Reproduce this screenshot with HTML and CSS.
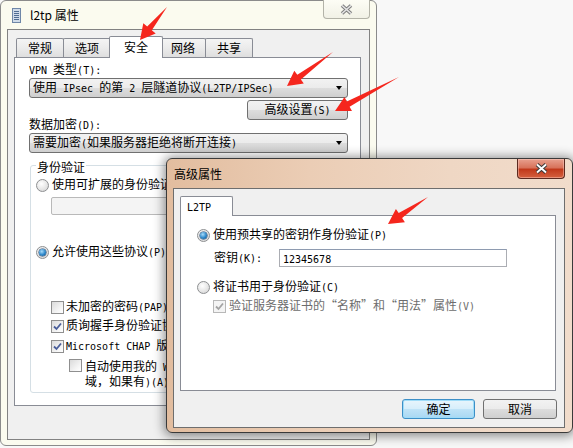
FILE: index.html
```html
<!DOCTYPE html>
<html lang="zh-CN">
<head>
  <meta charset="UTF-8" />
  <title>l2tp 属性</title>
  <link rel="stylesheet" href="styles.css">
</head>
<body>
<div class="desk">

  <!-- back window: l2tp properties -->
  <div class="win back">
    <div class="titlebar">
      <svg class="appicon" width="9" height="15" viewBox="0 0 9 15">
        <rect x="0.5" y="0.5" width="8" height="14" fill="#cfdbe9" stroke="#6f87a8"/>
        <path d="M2 3.5h5M2 5.5h5M2 7.5h5M2 9.5h5M2 11.5h5" stroke="#4f6c93"/>
      </svg>
      <span class="caption">l2tp 属性</span>
      <span class="close idle">
        <svg width="13" height="11" viewBox="0 0 13 11">
          <path d="M2 1.5l9 8M11 1.5l-9 8" stroke="#7d7d7d" stroke-width="3.6"/>
          <path d="M2 1.5l9 8M11 1.5l-9 8" stroke="#e4e4e4" stroke-width="1.6"/>
        </svg>
      </span>
    </div>
    <div class="client">
      <div class="tabs">
        <span class="tab">常规</span>
        <span class="tab">选项</span>
        <span class="tab sel">安全</span>
        <span class="tab narrow">网络</span>
        <span class="tab">共享</span>
      </div>
      <div class="page">
        <div class="lbl"><span class="e">VPN </span>类型<span class="e">(T):</span></div>
        <div class="combo">
          <span>使用<span class="e"> IPsec </span>的第<span class="e"> 2 </span>层隧道协议<span class="e">(L2TP/IPSec)</span></span>
          <span class="caret"></span>
        </div>
        <div class="btn-row">
          <span class="btn wide"><span>高级设置<span class="e">(S)</span></span></span>
        </div>
        <div class="lbl tight">数据加密<span class="e">(D):</span></div>
        <div class="combo">
          <span>需要加密<span class="e">(</span>如果服务器拒绝将断开连接<span class="e">)</span></span>
          <span class="caret"></span>
        </div>

        <div class="group">
          <div class="legend">身份验证</div>
          <div class="row first">
            <span class="radio"></span><span>使用可扩展的身份验证协议<span class="e">(EAP)(E)</span></span>
          </div>
          <div class="dcombo"></div>
          <div class="row r2">
            <span class="radio on"></span><span>允许使用这些协议<span class="e">(P)</span></span>
          </div>
          <div class="row sub c1">
            <span class="cb"></span><span>未加密的密码<span class="e">(PAP)</span></span>
          </div>
          <div class="row sub c2">
            <span class="cb"><svg width="11" height="11" viewBox="0 0 11 11"><path d="M2 5.5l2.5 2.5 4.5-5.5" fill="none" stroke="#4a5e9a" stroke-width="1.8"/></svg></span><span>质询握手身份验证协议<span class="e">(CHAP)</span></span>
          </div>
          <div class="row sub c3">
            <span class="cb"><svg width="11" height="11" viewBox="0 0 11 11"><path d="M2 5.5l2.5 2.5 4.5-5.5" fill="none" stroke="#4a5e9a" stroke-width="1.8"/></svg></span><span><span class="e">Microsoft CHAP </span>版本<span class="e"> 2 (MS-CHAP v2)</span></span>
          </div>
          <div class="row sub2">
            <span class="cb"></span>
            <span>自动使用我的<span class="e"> Windows </span>登录名称和密码<span class="e">(</span>及<br>域，如果有<span class="e">)(A)</span></span>
          </div>
        </div>
      </div>
    </div>
  </div>

  <!-- front dialog: advanced properties -->
  <div class="win dlg">
    <div class="titlebar">
      <span class="caption">高级属性</span>
      <span class="close hot">
        <svg width="13" height="11" viewBox="0 0 13 11">
          <path d="M2 1.5l9 8M11 1.5l-9 8" stroke="#3b3b3b" stroke-width="3.8"/>
          <path d="M2 1.5l9 8M11 1.5l-9 8" stroke="#fff" stroke-width="1.8"/>
        </svg>
      </span>
    </div>
    <div class="client">
      <div class="tabs">
        <span class="tab sel solo"><span class="e">L2TP</span></span>
      </div>
      <div class="page">
        <div class="row">
          <span class="radio on"></span><span>使用预共享的密钥作身份验证<span class="e">(P)</span></span>
        </div>
        <div class="row keyrow">
          <span class="klbl">密钥<span class="e">(K):</span></span>
          <span class="inp"><span class="e">12345678</span></span>
        </div>
        <div class="row r3">
          <span class="radio"></span><span>将证书用于身份验证<span class="e">(C)</span></span>
        </div>
        <div class="row off">
          <span class="cb dis"><svg width="11" height="11" viewBox="0 0 11 11"><path d="M2 5.5l2.5 2.5 4.5-5.5" fill="none" stroke="#a3a3a3" stroke-width="1.8"/></svg></span><span>验证服务器证书的“名称”和“用法”属性<span class="e">(V)</span></span>
        </div>
      </div>
      <div class="btns">
        <span class="btn ok">确定</span>
        <span class="btn cancel">取消</span>
      </div>
    </div>
  </div>

  <!-- red annotation arrows -->
  <svg class="arrows" width="573" height="448" viewBox="0 0 573 448">
    <polygon points="167,7 151.8,30.3 155.7,33.5 140,40 143.3,23.3 147.2,26.5"/>
    <polygon points="333,52 300.9,79.5 303.8,83.5 287,86 294.3,70.7 297.3,74.7"/>
    <polygon points="399,77 349.6,106.7 352,111.1 335,111 344.5,96.9 346.8,101.4"/>
    <polygon points="428,197 402.1,218.1 404.9,222.2 388,224 395.9,209 398.7,213.1"/>
  </svg>

</div>
</body>
</html>
```

FILE: styles.css
```css
* {
  box-sizing: border-box;
}

body {
  margin: 0;
  background: #f8f8f8;
  font-family: "Noto Sans CJK SC", sans-serif;
  font-size: 12px;
  line-height: 14px;
  color: #000;
}

.desk {
  position: relative;
  width: 573px;
  height: 448px;
  overflow: hidden;
}

/* half-width latin, like the SimSun ascii */
.e {
  font-family: "DejaVu Sans Mono", monospace;
  font-size: 10px;
}

.win {
  position: absolute;
  display: flex;
  flex-direction: column;
  border: 1px solid #8b8b8b;
  border-radius: 6px;
}

.back {
  left: 0;
  top: 0;
  width: 377px;
  height: 446px;
  background: #fbfbef;
}

.dlg {
  left: 166px;
  top: 158px;
  width: 407px;
  height: 275px;
  border-color: #3a3a3a;
  background: linear-gradient(to right, #e2bd9f, #ebcdb5 35%, #efd7c4 70%, #f1dccb);
  box-shadow: 0 1px 11px 2px rgba(0,0,0,0.45);
  z-index: 2;
}

.titlebar {
  display: flex;
  align-items: flex-start;
  flex: none;
  height: 28px;
}

.dlg .titlebar {
  height: 29px;
}

.appicon {
  margin: 7px 0 0 11px;
}

.caption {
  margin: 7px 0 0 9px;
  white-space: nowrap;
}

.dlg .caption {
  margin: 8px 0 0 7px;
}

.close {
  margin-left: auto;
  display: flex;
  align-items: center;
  justify-content: center;
  border-radius: 0 0 4px 4px;
}

.close.idle {
  width: 47px;
  height: 19px;
  margin: -1px 6px 0 auto;
  border: 1px solid #b3b3a8;
  border-top: none;
  background: linear-gradient(#fdfdf5, #f1f1e6);
}

.close.hot {
  width: 48px;
  height: 20px;
  margin-right: 7px;
  border: 1px solid #5b2a20;
  border-top: none;
  background: linear-gradient(#e8a08e, #d8735b 45%, #c1391b 55%, #d5613f);
  box-shadow: inset 0 0 0 1px rgba(255,210,200,0.45);
}

.client {
  flex: none;
  margin: 0 6px;
  height: 411px;
  border: 1px solid #828282;
  background: #f0f0f0;
  padding: 6px 0 0 6px;
}

.dlg .client {
  margin: 0 7px 0 6px;
  height: 240px;
  border-color: #6e6e6e;
  padding: 7px 0 0 6px;
}

.tabs {
  display: flex;
  align-items: flex-end;
  height: 21px;
  margin-left: 2px;
}

.dlg .tabs {
  height: 19px;
  margin-left: 0;
}

.tab {
  height: 19px;
  line-height: 18px;
  padding: 0 11px;
  margin-left: -1px;
  border: 1px solid #898c95;
  border-bottom: none;
  border-radius: 2px 2px 0 0;
  background: linear-gradient(#f4f4f4, #ebebeb 50%, #dedede);
  white-space: nowrap;
}

.tab:first-child {
  margin-left: 0;
}

.tab.narrow {
  padding: 0 10px;
}

.tab.sel {
  position: relative;
  z-index: 1;
  height: 22px;
  line-height: 20px;
  padding: 0 14px;
  margin: 0 -2px -1px -2px;
  background: #fff;
}

.tab.solo {
  height: 20px;
  line-height: 18px;
  padding: 0 21px 0 6px;
  margin: 0 0 -1px 0;
}

.page {
  width: 347px;
  height: 349px;
  background: #fff;
  border: 1px solid #898c95;
  padding: 4px 12px 0 14px;
}

.dlg .page {
  width: 376px;
  height: 176px;
  padding: 12px 0 0 16px;
}

.lbl {
  height: 14px;
  white-space: nowrap;
}

.lbl.tight {
  margin-top: -3px;
}

.combo {
  height: 20px;
  margin-top: 2px;
  display: flex;
  align-items: center;
  justify-content: space-between;
  padding: 0 5px 0 3px;
  border: 1px solid #707070;
  border-radius: 3px;
  background: linear-gradient(#f2f2f2, #ebebeb 50%, #dddddd 50%, #cfcfcf);
  white-space: nowrap;
}

.caret {
  width: 0;
  height: 0;
  border-top: 4px solid #000;
  border-left: 3px solid transparent;
  border-right: 3px solid transparent;
}

.btn-row {
  display: flex;
  justify-content: flex-end;
  margin-top: 2px;
}

.btn {
  height: 20px;
  display: flex;
  align-items: center;
  justify-content: center;
  border: 1px solid #707070;
  border-radius: 3px;
  background: linear-gradient(#f2f2f2, #ebebeb 50%, #dddddd 50%, #cfcfcf);
  white-space: nowrap;
}

.btn.wide {
  width: 101px;
}

.group {
  margin: 12px 0 0 1px;
  border: 1px solid #d5dfe5;
  border-radius: 3px;
  padding: 0 10px 3px 5px;
}

.legend {
  width: fit-content;
  margin-top: -6px;
  padding: 0 1px;
  background: #fff;
}

.row {
  display: flex;
  align-items: center;
  height: 14px;
  white-space: nowrap;
}

.row.first { margin-top: 4px; }
.row.r2 { margin-top: 30px; }
.row.c1 { margin-top: 41px; }
.row.c2 { margin-top: 5px; }
.row.c3 { margin-top: 6px; }

.row.sub {
  margin-left: 15px;
}

.row.sub2 {
  height: auto;
  align-items: flex-start;
  margin: 6px 0 0 33px;
  line-height: 13px;
}

.dcombo {
  height: 18px;
  margin: 5px 0 0 15px;
  border: 1px solid #b9b9b9;
  border-radius: 2px;
  background: #f4f4f4;
}

.radio {
  position: relative;
  flex: none;
  width: 13px;
  height: 13px;
  margin-right: 3px;
  border: 1px solid #8d8f91;
  border-radius: 50%;
  background: radial-gradient(circle at 40% 35%, #ffffff, #e6e6e6 55%, #cfcfcf);
}

.radio.on::after {
  content: "";
  position: absolute;
  left: 2px;
  top: 2px;
  width: 7px;
  height: 7px;
  border-radius: 50%;
  background: radial-gradient(circle at 40% 35%, #a8dcfa, #2c86c9 55%, #0c4a82);
  box-shadow: 0 0 0 0.5px #1b3f66;
}

.cb {
  flex: none;
  display: flex;
  align-items: center;
  justify-content: center;
  width: 13px;
  height: 13px;
  margin-right: 2px;
  border: 1px solid #8f8f8f;
  background: linear-gradient(135deg, #dadada, #f6f6f6 70%, #fff);
}

.row.sub2 .cb {
  margin-right: 3px;
}

.cb.dis {
  border-color: #b8b8b8;
  background: #f4f4f4;
  margin-right: 3px;
}

.keyrow {
  height: 18px;
  margin: 7px 0 0 17px;
}

.klbl {
  width: 65px;
}

.inp {
  width: 228px;
  height: 18px;
  padding-left: 3px;
  line-height: 16px;
  border: 1px solid #abadb3;
  border-top-color: #8e9bb0;
  background: #fff;
}

.row.r3 {
  margin-top: 13px;
}

.row.off {
  margin: 5px 0 0 16px;
  color: #6d6d6d;
}

.btns {
  display: flex;
  justify-content: flex-end;
  gap: 8px;
  margin-top: 8px;
  padding-right: 7px;
}

.btn.ok {
  width: 73px;
  border-color: #3c8fc7;
  background: linear-gradient(#e8f5fc, #d6eefb 50%, #bfe3f7 50%, #a9d8f3);
  box-shadow: inset 0 0 0 1px #9fdcf8;
}

.btn.cancel {
  width: 74px;
}

.arrows {
  position: absolute;
  left: 0;
  top: 0;
  z-index: 5;
  fill: #f5261d;
}
```
